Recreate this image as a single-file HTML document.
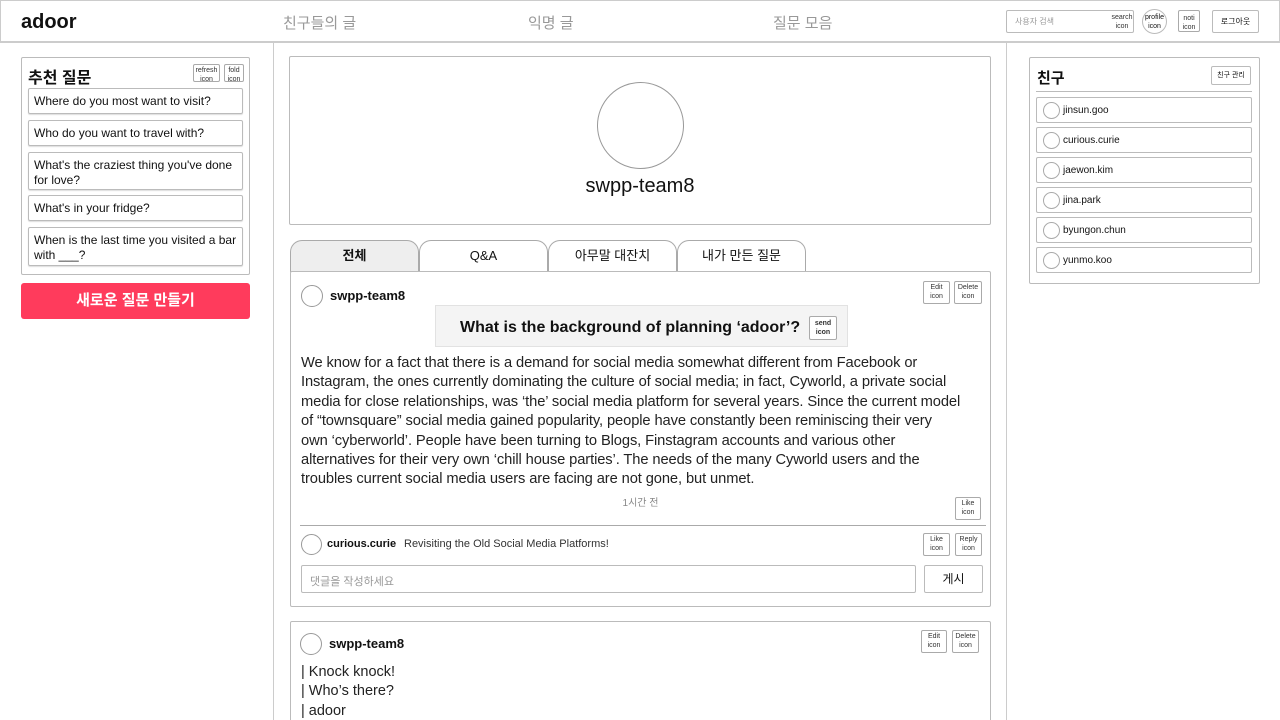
<!DOCTYPE html>
<html><head><meta charset="utf-8"><style>
*{box-sizing:border-box;margin:0;padding:0}
html,body{width:1280px;height:720px;overflow:hidden}
body{background:#fff;font-family:"Liberation Sans","Noto Sans CJK KR",sans-serif;color:#111;position:relative}
.a{position:absolute}
.bx{position:absolute;border:1px solid #bbb;border-radius:2px;background:#fff}
.ic{position:absolute;border:1px solid #aaa;border-radius:2px;font-size:7px;line-height:9px;text-align:center;color:#333;padding-top:1px;background:#fff}
.q{position:absolute;left:28px;width:215px;border:1px solid #bbb;border-radius:2px;font-size:12px;line-height:15px;padding:5px 5px;box-shadow:0 1px 1px #ddd}
.f{position:absolute;left:1036px;width:216px;height:26px;border:1px solid #bbb;border-radius:2px;font-size:10px;padding-left:26px;display:flex;align-items:center}
.f:before{content:"";position:absolute;left:6px;top:4px;width:15px;height:15px;border:1px solid #aaa;border-radius:50%}
.tab{position:absolute;top:240px;width:129px;height:32px;border:1px solid #aaa;border-bottom:none;border-radius:12px 12px 0 0;font-size:13px;text-align:center;line-height:29px;background:#fff}
.av{position:absolute;border:1px solid #999;border-radius:50%}
</style></head><body>
<div class="a" style="left:0;top:0;width:1280px;height:43px;border:1px solid #ccc;border-bottom:2px solid #ccc"></div>
<div class="a" style="left:21px;top:11px;font-size:20px;font-weight:bold">adoor</div>
<div class="a" style="left:283px;top:12px;font-size:15px;color:#999">친구들의 글</div>
<div class="a" style="left:528px;top:12px;font-size:15px;color:#999">익명 글</div>
<div class="a" style="left:773px;top:12px;font-size:15px;color:#999">질문 모음</div>
<div class="bx" style="left:1006px;top:10px;width:128px;height:23px;font-size:8px;color:#999;padding:5px 0 0 8px">사용자 검색</div>
<div class="ic" style="left:1111px;top:12px;width:22px;height:19px;border:none;font-size:7px">search<br>icon</div>
<div class="av" style="left:1142px;top:9px;width:25px;height:25px;font-size:7px;text-align:center;line-height:9px;padding-top:3px;border-color:#bbb">profile<br>icon</div>
<div class="ic" style="left:1178px;top:10px;width:22px;height:22px;padding-top:3px">noti<br>icon</div>
<div class="bx" style="left:1212px;top:10px;width:47px;height:23px;font-size:8px;text-align:center;line-height:21px">로그아웃</div>
<div class="a" style="left:273px;top:43px;width:1px;height:677px;background:#ccc"></div>
<div class="a" style="left:1006px;top:43px;width:1px;height:677px;background:#ccc"></div>

<div class="bx" style="left:21px;top:57px;width:229px;height:218px"></div>
<div class="a" style="left:28px;top:64px;font-size:16px;font-weight:bold">추천 질문</div>
<div class="ic" style="left:193px;top:64px;width:27px;height:18px">refresh<br>icon</div>
<div class="ic" style="left:224px;top:64px;width:20px;height:18px">fold<br>icon</div>
<div class="q" style="top:88px;height:26px">Where do you most want to visit?</div>
<div class="q" style="top:120px;height:26px">Who do you want to travel with?</div>
<div class="q" style="top:152px;height:38px">What's the craziest thing you've done for love?</div>
<div class="q" style="top:195px;height:26px">What's in your fridge?</div>
<div class="q" style="top:227px;height:39px">When is the last time you visited a bar with ___?</div>
<div class="a" style="left:21px;top:283px;width:229px;height:36px;background:#ff3b5c;border-radius:3px;color:#fff;font-size:15px;font-weight:bold;text-align:center;line-height:35px">새로운 질문 만들기</div>

<div class="bx" style="left:289px;top:56px;width:702px;height:169px"></div>
<div class="av" style="left:597px;top:82px;width:87px;height:87px"></div>
<div class="a" style="left:289px;top:175px;width:702px;text-align:center;font-size:20px">swpp-team8</div>

<div class="tab" style="left:290px;background:#eee;font-weight:bold">전체</div>
<div class="tab" style="left:419px">Q&amp;A</div>
<div class="tab" style="left:548px">아무말 대잔치</div>
<div class="tab" style="left:677px">내가 만든 질문</div>

<div class="bx" style="left:290px;top:271px;width:701px;height:336px"></div>
<div class="av" style="left:301px;top:285px;width:22px;height:22px"></div>
<div class="a" style="left:330px;top:288px;font-size:13px;font-weight:bold">swpp-team8</div>
<div class="ic" style="left:923px;top:281px;width:27px;height:23px">Edit<br>icon</div>
<div class="ic" style="left:954px;top:281px;width:28px;height:23px">Delete<br>icon</div>
<div class="a" style="left:435px;top:305px;width:413px;height:42px;background:#f4f4f4;border:1px solid #e2e2e2;font-size:16px;font-weight:bold;line-height:44px;padding-left:24px">What is the background of planning ‘adoor’?</div>
<div class="ic" style="left:809px;top:316px;width:28px;height:24px;font-weight:bold;padding-top:2px">send<br>icon</div>
<div class="a" style="left:301px;top:354px;width:660px;font-size:14.7px;line-height:19.4px;color:#222;letter-spacing:-0.1px">We know for a fact that there is a demand for social media somewhat different from Facebook or Instagram, the ones currently dominating the culture of social media; in fact, Cyworld, a private social media for close relationships, was ‘the’ social media platform for several years. Since the current model of “townsquare” social media gained popularity, people have constantly been reminiscing their very own ‘cyberworld’. People have been turning to Blogs, Finstagram accounts and various other alternatives for their very own ‘chill house parties’. The needs of the many Cyworld users and the troubles current social media users are facing are not gone, but unmet.</div>
<div class="a" style="left:290px;top:494px;width:701px;text-align:center;font-size:10px;color:#888">1시간 전</div>
<div class="ic" style="left:955px;top:497px;width:26px;height:23px">Like<br>icon</div>
<div class="a" style="left:300px;top:525px;width:686px;height:1px;background:#aaa"></div>
<div class="av" style="left:301px;top:534px;width:21px;height:21px"></div>
<div class="a" style="left:327px;top:538px;font-size:11px;font-weight:bold">curious.curie</div>
<div class="a" style="left:404px;top:538px;font-size:11px;color:#333">Revisiting the Old Social Media Platforms!</div>
<div class="ic" style="left:923px;top:533px;width:27px;height:23px">Like<br>icon</div>
<div class="ic" style="left:955px;top:533px;width:27px;height:23px">Reply<br>icon</div>
<div class="bx" style="left:301px;top:565px;width:615px;height:28px;font-size:11px;color:#999;padding:7px 0 0 8px">댓글을 작성하세요</div>
<div class="bx" style="left:924px;top:565px;width:59px;height:28px;font-size:12px;text-align:center;line-height:26px">게시</div>

<div class="bx" style="left:290px;top:621px;width:701px;height:120px"></div>
<div class="av" style="left:300px;top:633px;width:22px;height:22px"></div>
<div class="a" style="left:329px;top:636px;font-size:13px;font-weight:bold">swpp-team8</div>
<div class="ic" style="left:921px;top:630px;width:26px;height:23px">Edit<br>icon</div>
<div class="ic" style="left:952px;top:630px;width:27px;height:23px">Delete<br>icon</div>
<div class="a" style="left:301px;top:663px;font-size:14.5px;line-height:19.4px;color:#222">| Knock knock!<br>| Who’s there?<br>| adoor</div>

<div class="bx" style="left:1029px;top:57px;width:231px;height:227px"></div>
<div class="a" style="left:1037px;top:67px;font-size:15px;font-weight:bold">친구</div>
<div class="bx" style="left:1211px;top:66px;width:40px;height:19px;font-size:7px;text-align:center;line-height:17px">친구 관리</div>
<div class="a" style="left:1036px;top:91px;width:216px;height:1px;background:#bbb"></div>
<div class="f" style="top:97px">jinsun.goo</div>
<div class="f" style="top:127px">curious.curie</div>
<div class="f" style="top:157px">jaewon.kim</div>
<div class="f" style="top:187px">jina.park</div>
<div class="f" style="top:217px">byungon.chun</div>
<div class="f" style="top:247px">yunmo.koo</div>
</body></html>
